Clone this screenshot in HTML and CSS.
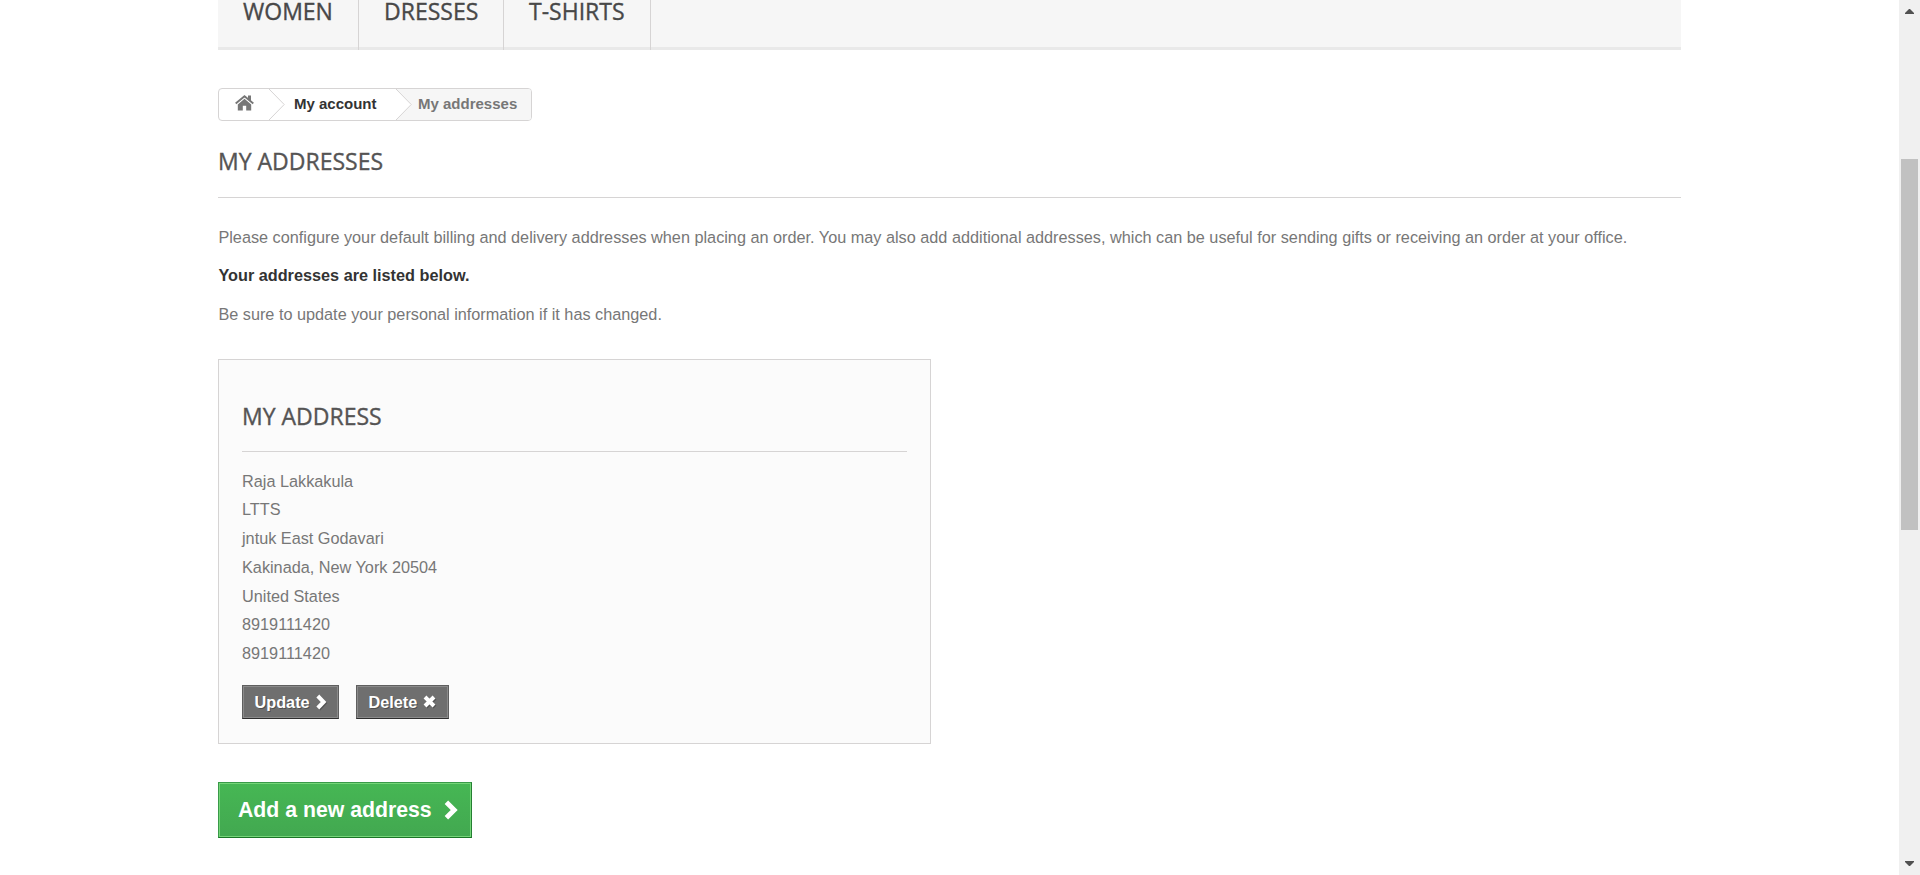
FILE: index.html
```html
<!DOCTYPE html>
<html lang="en">
<head>
<meta charset="utf-8">
<title>My addresses</title>
<link rel="stylesheet" href="styles.css">
</head>
<body>
<div class="viewport">
  <main class="page">
    <nav class="menu">
      <a class="menu-item women">WOMEN</a>
      <a class="menu-item dresses">DRESSES</a>
      <a class="menu-item shirts">T-SHIRTS</a>
    </nav>
    <div class="breadcrumb">
      <a class="crumb home">
        <svg class="home-icon" width="19" height="16" viewBox="0 0 19 16"><path fill="#777" d="M2.8 9.4 9.5 3.8 16.2 9.4V15.4H11.2V10.8H7.8V15.4H2.8Z"/><path fill="none" stroke="#777" stroke-width="1.9" d="M.7 8.6 9.5 1.3 18.3 8.6"/><path fill="#777" d="M13 0.4h3v6.4l-3-2.4z"/></svg>
      </a>
      <svg class="arrow" width="16" height="31" viewBox="0 0 16 31"><path d="M0 0 15.2 15.5 0 31" fill="#fff" stroke="#d6d4d4"/></svg>
      <a class="crumb account">My account</a>
      <svg class="arrow shaded" width="16" height="31" viewBox="0 0 16 31"><path d="M0 0 15.2 15.5 0 31" fill="#fff" stroke="#d6d4d4"/></svg>
      <span class="crumb current">My addresses</span>
    </div>
    <h1 class="heading">MY ADDRESSES</h1>
    <p class="text intro">Please configure your default billing and delivery addresses when placing an order. You may also add additional addresses, which can be useful for sending gifts or receiving an order at your office.</p>
    <p class="text strong">Your addresses are listed below.</p>
    <p class="text">Be sure to update your personal information if it has changed.</p>
    <section class="card">
      <h3 class="card-title">MY ADDRESS</h3>
      <ul class="address">
        <li>Raja Lakkakula</li>
        <li>LTTS</li>
        <li>jntuk East Godavari</li>
        <li>Kakinada, New York 20504</li>
        <li>United States</li>
        <li>8919111420</li>
        <li>8919111420</li>
      </ul>
      <div class="actions">
        <a class="btn update"><span>Update</span><svg class="icon" width="11" height="16" viewBox="0 0 11 16"><path d="M1.8 2 7.6 8 1.8 14" fill="none" stroke="#fff" stroke-width="4"/></svg></a>
        <a class="btn delete"><span>Delete</span><svg class="icon" width="13" height="13" viewBox="0 0 13 13"><path d="M2 2 11 11M11 2 2 11" fill="none" stroke="#fff" stroke-width="4"/></svg></a>
      </div>
    </section>
    <a class="add"><span>Add a new address</span><svg width="14" height="20" viewBox="0 0 14 20"><path d="M2.4 2.2 10.2 10 2.4 17.8" fill="none" stroke="#fff" stroke-width="4.9"/></svg></a>
  </main>
  <aside class="scrollbar">
    <svg width="9" height="5" viewBox="0 0 9 5"><path fill="#505050" d="M0 5V4L4 0H5L9 4V5Z"/></svg>
    <div class="track"><div class="thumb"></div></div>
    <svg width="9" height="5" viewBox="0 0 9 5"><path fill="#505050" d="M0 0V1L4 5H5L9 1V0Z"/></svg>
  </aside>
</div>
</body>
</html>
```
FILE: styles.css
```css
* { box-sizing: border-box; }
body { margin: 0; background: #fff; color: #777; font: 16.25px/22.5px "Liberation Sans", Arial, sans-serif; }
.viewport { display: flex; justify-content: space-between; height: 875px; overflow: hidden; }
.page { width: 1463px; margin-left: 218px; flex: none; }
.menu { display: flex; height: 50px; background: #f6f6f6; border-bottom: 3px solid #e9e9e9; }
.menu-item { height: 50px; padding-left: 25px; border-right: 1px solid #d6d4d4; font: 500 23px/22px "Open Sans", sans-serif; color: #484848; -webkit-text-stroke: .35px #484848; white-space: nowrap; }
.women { width: 141px; }
.dresses { width: 145px; }
.shirts { width: 147px; }
.breadcrumb { display: flex; width: 314px; height: 33px; margin-top: 38px; border: 1px solid #d6d4d4; border-radius: 4px; overflow: hidden; font-size: 15px; font-weight: bold; line-height: 29px; white-space: nowrap; }
.home { width: 50px; padding: 6px 0 0 16px; }
.home-icon { display: block; }
.arrow { flex: none; }
.shaded { background: #f6f6f6; }
.account { width: 111px; padding-left: 9px; color: #333; }
.current { flex: 1; padding-left: 6px; background: #f6f6f6; }
.heading, .card-title { border-bottom: 1px solid #d6d4d4; font: 500 23px/26px "Open Sans", sans-serif; color: #555454; -webkit-text-stroke: .35px #555454; }
.heading { height: 50px; margin: 27px 0 28px; }
.text { margin: 0 0 16px; padding-left: .4px; white-space: nowrap; }
.intro { margin-bottom: 15px; }
.strong { margin-bottom: 17px; color: #333; font-weight: bold; }
.card { width: 713px; height: 385px; margin-top: 33px; padding: 43px 23px 0; border: 1px solid #d6d4d4; background: #fbfbfb; }
.card-title { height: 49px; margin: 0; }
.address { margin: 15px 0 0; padding: 0; list-style: none; line-height: 28.75px; }
.actions { display: flex; gap: 17px; margin-top: 17px; }
.btn { display: flex; align-items: center; gap: 6px; height: 34px; padding-left: 11.5px; border: 1px solid; border-color: #5f5f5f #5f5f5f #2e2e2e; background: #6f6f6f; box-shadow: inset 0 0 0 1px #8b8b8b; color: #fff; font-weight: bold; text-shadow: 1px 1px rgba(0,0,0,.3); }
.icon { filter: drop-shadow(1px 1px 0 rgba(0,0,0,.25)); }
.update { width: 97px; }
.delete { width: 93px; }
.add { display: flex; align-items: center; gap: 12px; width: 254px; height: 56px; margin-top: 38px; padding-left: 19px; border: 1px solid; border-color: #399a49 #247f32 #1a7427 #399a49; background: linear-gradient(#46b754, #42a850); box-shadow: inset 0 0 0 1px #74d578; color: #fff; font-size: 21.25px; font-weight: bold; line-height: 26px; white-space: nowrap; }
.scrollbar { display: flex; flex-direction: column; align-items: center; width: 21px; height: 875px; padding: 9px 0; background: #f0f0f0; }
.track { flex: 1; padding-top: 145px; }
.thumb { width: 17px; height: 371px; background: #c1c1c1; }
```
